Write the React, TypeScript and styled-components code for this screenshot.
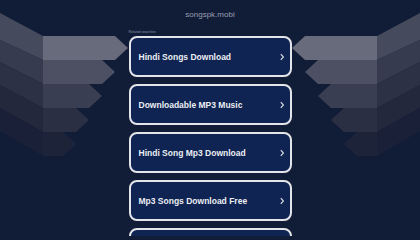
import React from 'react';
import styled, {createGlobalStyle} from 'styled-components';

const GlobalStyle = createGlobalStyle`
    html, body {
        margin: 0;
        padding: 0;
        background: #111c37;
        overflow: hidden;
    }
`;

const Page = styled.div`
    position: relative;
    width: 420px;
    height: 236px;
    overflow: hidden;
    background: #111c37;
    font-family: "Liberation Sans", Arial, sans-serif;
`;

const Backdrop = styled.svg`
    position: absolute;
    left: 0;
    top: 0;
    width: 420px;
    height: 236px;
`;

const Content = styled.div`
    position: relative;
    display: flex;
    flex-direction: column;
    align-items: center;
    padding-top: 9px;
`;

const Domain = styled.div`
    font-size: 8px;
    line-height: 12px;
    color: #9a9fae;
`;

const Related = styled.div`
    width: 163px;
    margin-top: 9px;
    margin-bottom: 1px;
    font-size: 3.5px;
    line-height: 5px;
    color: #8e94a6;
`;

const List = styled.div`
    display: flex;
    flex-direction: column;
    gap: 7px;
`;

const Card = styled.a`
    box-sizing: border-box;
    display: flex;
    align-items: center;
    justify-content: space-between;
    width: 163px;
    height: 41px;
    padding: 0 5px 0 8px;
    border: 2px solid #e4e5ea;
    border-radius: 8px;
    background: #0f2453;
    color: #eceef2;
    font-size: 8.5px;
    font-weight: bold;
    text-decoration: none;
`;

const Chevron = styled.svg`
    width: 6px;
    height: 8px;
    flex-shrink: 0;
`;

const searches = [
    'Hindi Songs Download',
    'Downloadable MP3 Music',
    'Hindi Song Mp3 Download',
    'Mp3 Songs Download Free',
    'Free Hindi Songs Download',
];

const fronts = ['#686b7c', '#4c5062', '#3a3e52', '#2a2f44', '#1d2339'];
const sides = ['#454a5c', '#373b4f', '#2c3145', '#23283d', '#1a2037'];
const sideY = [13, 40, 62, 85, 108, 131];

const arrows = fronts.map((_, i) => {
    const top = 36 + i * 24;
    const bottom = top + 24;
    const mid = top + 12;
    const tip = 128 - i * 13;
    const end = tip - 13;
    return {
        front: [[43, top], [end, top], [tip, mid], [end, bottom], [43, bottom]],
        side: [[0, sideY[i]], [43, top], [43, bottom], [0, sideY[i + 1]]],
    };
});

const pts = (list: number[][], mirror: boolean) =>
    list.map(([x, y]) => `${mirror ? 420 - x : x},${y}`).join(' ');

const App: React.FC = () => {
    return (
        <Page>
            <GlobalStyle/>
            <Backdrop viewBox="0 0 420 236">
                {arrows.map((a, i) => (
                    <g key={i}>
                        <polygon points={pts(a.side, false)} fill={sides[i]}/>
                        <polygon points={pts(a.front, false)} fill={fronts[i]}/>
                        <polygon points={pts(a.side, true)} fill={sides[i]}/>
                        <polygon points={pts(a.front, true)} fill={fronts[i]}/>
                    </g>
                ))}
            </Backdrop>
            <Content>
                <Domain>songspk.mobi</Domain>
                <Related>Related searches</Related>
                <List>
                    {searches.map(item => (
                        <Card key={item}>
                            {item}
                            <Chevron viewBox="0 0 6 8">
                                <path d="M1.8 1.2 L4.4 4 L1.8 6.8" fill="none" stroke="#d6d8e0" strokeWidth="1.2"/>
                            </Chevron>
                        </Card>
                    ))}
                </List>
            </Content>
        </Page>
    );
};

export default App;
